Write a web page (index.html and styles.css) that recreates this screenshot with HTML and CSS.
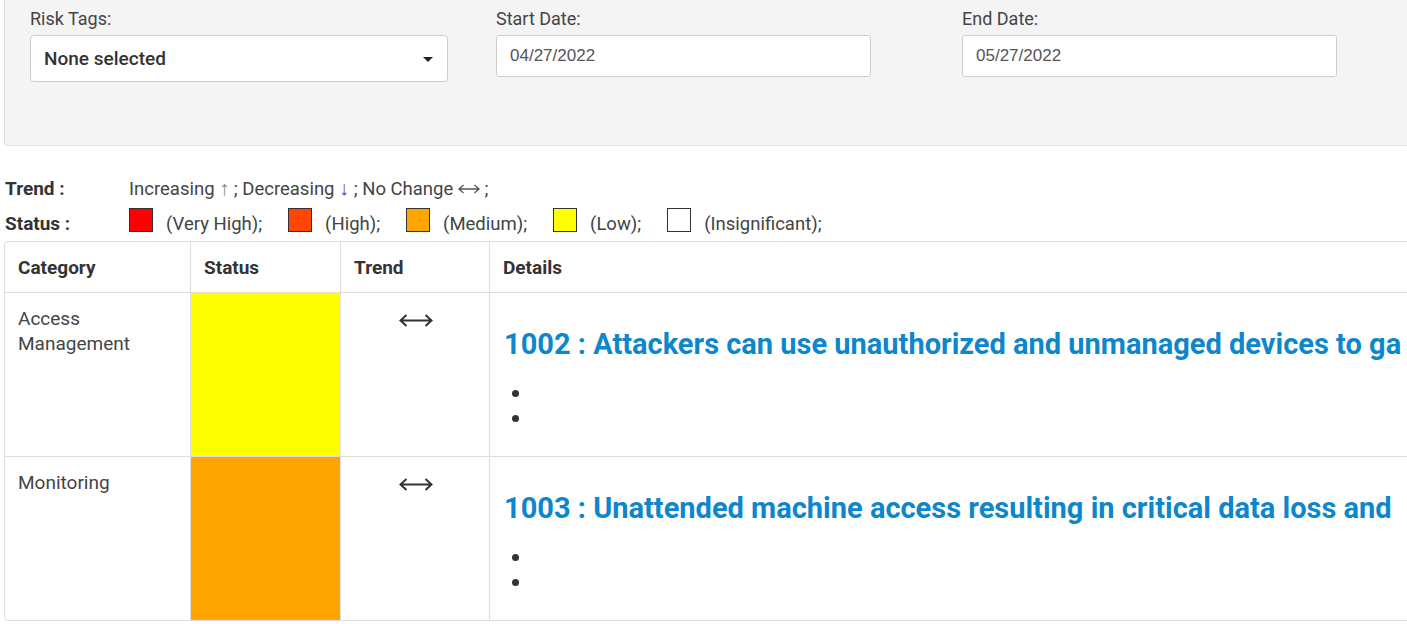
FILE: index.html
```html
<!DOCTYPE html>
<html lang="en">
<head>
<meta charset="utf-8">
<title>Risk Report</title>
<link rel="stylesheet" href="styles.css">
</head>
<body>
<div class="page">
  <div class="filters">
    <div class="field">
      <label class="field-label">Risk Tags:</label>
      <div class="select">None selected<span class="caret"></span></div>
    </div>
    <div class="field">
      <label class="field-label">Start Date:</label>
      <div class="input">04/27/2022</div>
    </div>
    <div class="field">
      <label class="field-label">End Date:</label>
      <div class="input">05/27/2022</div>
    </div>
  </div>

  <div class="legend">
    <div class="legend-row">
      <span class="legend-title">Trend :</span>
      <span class="legend-text">Increasing <span class="arrow up">↑</span> ; Decreasing <span class="arrow down">↓</span> ; No Change <svg class="lr-small" viewBox="0 0 22 10" aria-label="↔"><path d="M1 5H21M5.5 1L1 5L5.5 9M16.5 1L21 5L16.5 9" fill="none" stroke="#555" stroke-width="1.3"/></svg> ;</span>
    </div>
    <div class="legend-row">
      <span class="legend-title">Status :</span>
      <span class="swatch very-high"></span><span class="swatch-label">(Very High);</span>
      <span class="swatch high"></span><span class="swatch-label">(High);</span>
      <span class="swatch medium"></span><span class="swatch-label">(Medium);</span>
      <span class="swatch low"></span><span class="swatch-label">(Low);</span>
      <span class="swatch insignificant"></span><span class="swatch-label">(Insignificant);</span>
    </div>
  </div>

  <table class="risk-table">
    <colgroup>
      <col class="c-cat"><col class="c-status"><col class="c-trend"><col class="c-details">
    </colgroup>
    <thead>
      <tr><th>Category</th><th>Status</th><th>Trend</th><th>Details</th></tr>
    </thead>
    <tbody>
      <tr>
        <td>Access Management</td>
        <td class="status low"></td>
        <td class="trend"><svg class="lr" viewBox="0 0 34 13" aria-label="↔"><path d="M1.5 6.5H32.5M7.5 1L1.5 6.5L7.5 12M26.5 1L32.5 6.5L26.5 12" fill="none" stroke="#333" stroke-width="2"/></svg></td>
        <td class="details">
          <h3 class="risk-title">1002 : Attackers can use unauthorized and unmanaged devices to ga</h3>
          <ul class="risk-list"><li></li><li></li></ul>
        </td>
      </tr>
      <tr>
        <td>Monitoring</td>
        <td class="status medium"></td>
        <td class="trend"><svg class="lr" viewBox="0 0 34 13" aria-label="↔"><path d="M1.5 6.5H32.5M7.5 1L1.5 6.5L7.5 12M26.5 1L32.5 6.5L26.5 12" fill="none" stroke="#333" stroke-width="2"/></svg></td>
        <td class="details">
          <h3 class="risk-title">1003 : Unattended machine access resulting in critical data loss and</h3>
          <ul class="risk-list"><li></li><li></li></ul>
        </td>
      </tr>
    </tbody>
  </table>
</div>
</body>
</html>
```

FILE: styles.css
```css
html, body {
  margin: 0;
  padding: 0;
  overflow: hidden;
  background: #fff;
}
body {
  font-family: Roboto, "Liberation Sans", sans-serif;
  color: #333;
}
.page {
  padding-left: 4px;
  width: 1600px;
}

/* Filters panel */
.filters {
  display: grid;
  grid-template-columns: 466px 466px 466px;
  background: #f4f4f4;
  border: 1px solid #e0e0e0;
  border-top: none;
  border-radius: 0 0 4px 4px;
  padding: 7px 0 0 25px;
  box-sizing: border-box;
  height: 146px;
}
.field-label {
  display: block;
  font-size: 18px;
  line-height: 24px;
  color: #444;
  margin-bottom: 4px;
}
.select {
  width: 418px;
  height: 47px;
  box-sizing: border-box;
  background: #fff;
  border: 1px solid #ccc;
  border-radius: 4px;
  display: flex;
  align-items: center;
  padding: 0 13px;
  font-size: 19px;
  font-weight: 500;
  color: #333;
  position: relative;
}
.caret {
  position: absolute;
  right: 14px;
  top: 21px;
  width: 0;
  height: 0;
  border-left: 5px solid transparent;
  border-right: 5px solid transparent;
  border-top: 5px solid #222;
}
.input {
  width: 375px;
  height: 42px;
  box-sizing: border-box;
  background: #fff;
  border: 1px solid #ccc;
  border-radius: 3px;
  display: flex;
  align-items: center;
  padding: 0 13px;
  font-family: "Liberation Sans", Arial, sans-serif;
  font-size: 17px;
  color: #555;
}

/* Legend */
.legend {
  padding-top: 25px;
}
.legend-row {
  display: flex;
  align-items: center;
  height: 35px;
  font-size: 18.5px;
}
.legend-title {
  width: 125px;
  padding-left: 1px;
  box-sizing: border-box;
  font-weight: 700;
  font-size: 19px;
  color: #333;
}
.legend-text {
  color: #444;
}
.arrow {
  font-family: "Liberation Sans", sans-serif;
  font-size: 20px;
}
.up { color: #7f8a66; }
.down { color: #8b3d9e; }
.lr-small {
  width: 22px;
  height: 10px;
  vertical-align: 1px;
}
.swatch {
  width: 24px;
  height: 24px;
  box-sizing: border-box;
  border: 1px solid #333;
  margin-right: 13px;
  margin-bottom: 8px;
}
.swatch-label {
  color: #444;
  margin-right: 26px;
}
.swatch.very-high { background: #ff0000; }
.swatch.high { background: #ff4500; }
.swatch.medium { background: #ffa500; }
.swatch.low { background: #ffff00; }
.swatch.insignificant { background: #fff; }

/* Table */
.risk-table {
  border-collapse: separate;
  border-spacing: 0;
  border: 1px solid #ddd;
  border-radius: 4px;
  table-layout: fixed;
  width: 1500px;
}
.c-cat { width: 185px; }
.c-status { width: 150px; }
.c-trend { width: 149px; }
.risk-table th,
.risk-table td {
  padding: 13px 13px;
  vertical-align: top;
  text-align: left;
  font-size: 19px;
  line-height: 25px;
  border-left: 1px solid #ddd;
  border-top: 1px solid #ddd;
}
.risk-table th {
  font-weight: 700;
  color: #333;
  border-top: none;
  padding-bottom: 12px;
}
.risk-table th:first-child,
.risk-table td:first-child {
  border-left: none;
}
.risk-table td { color: #444; }
.risk-table td.status.low { background: #ffff00; }
.risk-table td.status.medium { background: #ffa500; }
.risk-table td.trend {
  text-align: center;
  padding-top: 21px;
}
.lr {
  display: block;
  width: 34px;
  height: 13px;
  margin: 0 auto;
  transform: translateX(1px);
}
.risk-table td.details { overflow: hidden; padding-left: 14px; }
.risk-title {
  margin: 23px 0 21px;
  font-size: 29px;
  line-height: 31px;
  font-weight: 700;
  color: #0d87cc;
  white-space: nowrap;
}
.risk-list {
  list-style: none;
  margin: 0 0 12px 8px;
  padding: 0;
}
.risk-list li {
  display: flex;
  align-items: center;
  height: 25px;
}
.risk-list li::before {
  content: "";
  width: 7px;
  height: 7px;
  border-radius: 50%;
  background: #333;
}
```
